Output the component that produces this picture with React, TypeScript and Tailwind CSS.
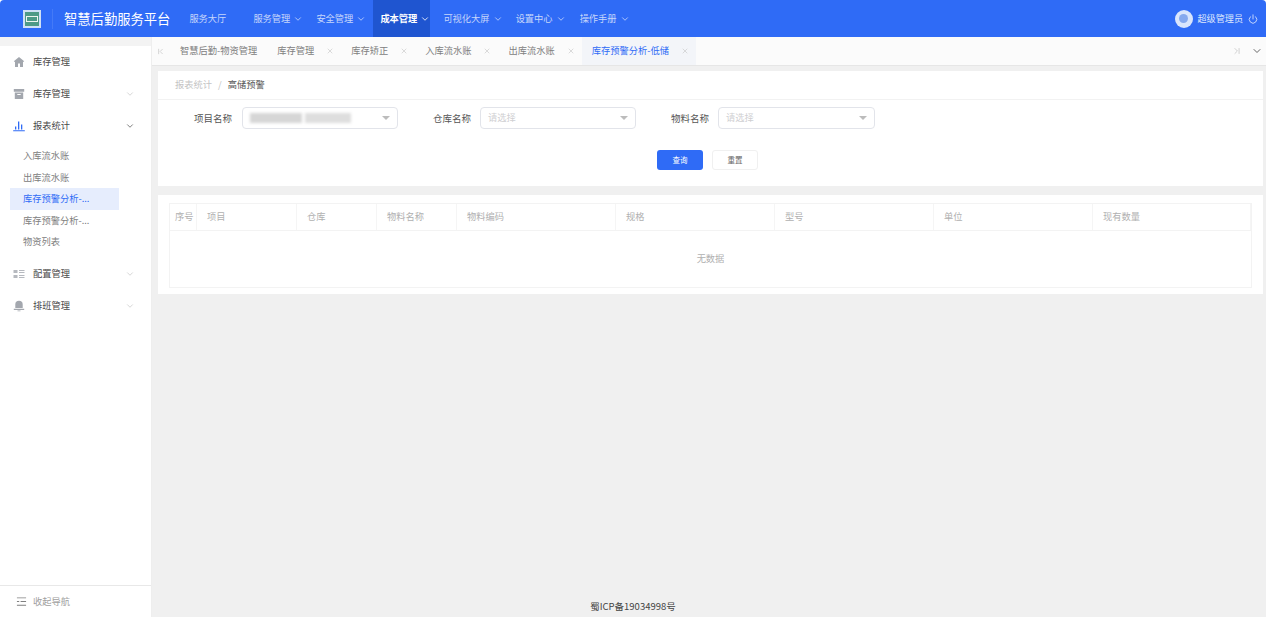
import { ChevronDown, ChevronFirst, ChevronLast, Power, X } from "lucide-react";

const font = "font-['Noto_Sans_CJK_SC','Noto_Sans',sans-serif]";

const topNav = [
  { label: "服务大厅", ml: "ml-[19px]", arrow: false },
  { label: "服务管理", ml: "ml-[27px]", arrow: true },
  { label: "安全管理", ml: "ml-[13px]", arrow: true },
  { label: "成本管理", ml: "ml-[7px]", arrow: true, active: true },
  { label: "可视化大屏", ml: "ml-[13px]", arrow: true },
  { label: "设置中心", ml: "ml-[13px]", arrow: true },
  { label: "操作手册", ml: "ml-[14px]", arrow: true },
];

const tabs = [
  { label: "智慧后勤-物资管理", closable: false },
  { label: "库存管理", closable: true },
  { label: "库存矫正", closable: true },
  { label: "入库流水账", closable: true },
  { label: "出库流水账", closable: true },
  { label: "库存预警分析-低储", closable: true, active: true },
];

const columns = [
  { label: "序号", w: "w-[27px]", px: "pl-[5px]" },
  { label: "项目", w: "w-[100px]", px: "pl-[10px]" },
  { label: "仓库", w: "w-[80px]", px: "pl-[10px]" },
  { label: "物料名称", w: "w-[80px]", px: "pl-[10px]" },
  { label: "物料编码", w: "w-[159px]", px: "pl-[10px]" },
  { label: "规格", w: "w-[159px]", px: "pl-[10px]" },
  { label: "型号", w: "w-[159px]", px: "pl-[10px]" },
  { label: "单位", w: "w-[159px]", px: "pl-[10px]" },
  { label: "现有数量", w: "flex-1", px: "pl-[10px]" },
];

function HomeIcon() {
  return (
    <svg viewBox="0 0 12 12" className="w-3 h-3 text-[#a3a7ae]" fill="currentColor">
      <path d="M6 1 .8 5.200l.7.8.5-.4V11h3V7.500h2V11h3V5.600l.5.4.7-.8z" />
    </svg>
  );
}

function BoxIcon() {
  return (
    <svg viewBox="0 0 12 12" className="w-3 h-3 text-[#a3a7ae]" fill="currentColor">
      <path d="M.8 1h10.400v2.800H.8zM1.800 4.600h8.400V11H1.800z" />
      <path d="M4.300 6h3.400v1H4.300z" fill="#fff" />
    </svg>
  );
}

function ChartIcon() {
  return (
    <svg viewBox="0 0 12 12" className="w-3 h-3 text-[#2f6bf6]" fill="currentColor">
      <path d="M2 6.500h1.300V9.500H2zM5 1.500h1.300v8H5zM8 4.500h1.300v5H8zM.2 10.300h11.600v1H.2z" />
    </svg>
  );
}

function ListIcon() {
  return (
    <svg viewBox="0 0 12 12" className="w-3 h-3 text-[#b6b9bf]" fill="currentColor">
      <path d="M.5 2h4v3h-4zM.5 7h4v3h-4zM6 2h5.500v1H6zM6 4h5.500v1H6zM6 7h5.500v1H6zM6 9h5.500v1H6z" />
    </svg>
  );
}

function BellIcon() {
  return (
    <svg viewBox="0 0 12 12" className="w-3 h-3 text-[#a3a7ae]" fill="currentColor">
      <path d="M6 .8a3.700 3.700 0 0 0-3.700 3.700V8H9.700V4.500A3.700 3.700 0 0 0 6 .8zM.8 8.800h10.400v1.200H.8zM4.500 10.500h3V11.300h-3z" />
    </svg>
  );
}

function SideItem({ icon, label, arrow, dark }: { icon: React.ReactNode; label: string; arrow?: boolean; dark?: boolean }) {
  return (
    <div className="h-8 flex items-center pl-[13px] pr-[16px]">
      <span className="w-3 h-3 shrink-0 flex">{icon}</span>
      <span className="ml-2 text-[9.25px] text-[#4a4a4a]">{label}</span>
      {arrow && <ChevronDown className={`ml-auto w-[10px] h-[10px] ${dark ? "text-[#666]" : "text-[#cfcfcf]"}`} />}
    </div>
  );
}

function SelectBox({ placeholder, blurred, className }: { placeholder?: string; blurred?: boolean; className: string }) {
  return (
    <div className={`${className} h-[22px] border border-[#e2e4ea] rounded-[4px] flex items-center pl-[7px] pr-[7px] bg-white`}>
      {blurred ? (
        <div className="flex gap-[3px] blur-[1.500px]">
          <span className="w-[52px] h-[10px] bg-[#d6d6d6]" />
          <span className="w-[46px] h-[10px] bg-[#dedede]" />
        </div>
      ) : (
        <span className="text-[9.25px] text-[#cfcfd2]">{placeholder}</span>
      )}
      <span className="ml-auto w-0 h-0 border-x-[4px] border-x-transparent border-t-[4px] border-t-[#bcbcbc]" />
    </div>
  );
}

export default function App() {
  return (
    <div className={`h-screen flex flex-col overflow-hidden bg-white ${font}`}>
      {/* Header */}
      <header className="h-[37px] shrink-0 bg-[#2f6bf6] rounded-t-[4px] flex items-center text-white">
        <div className="ml-[23px] w-[18px] h-[18px] border-2 border-[#cfe0f5] bg-[#4e9a86] flex items-center justify-center">
          <span className="w-[12px] h-[6px] border border-[#eef4ee]" />
        </div>
        <span className="ml-[11px] w-px h-5 bg-white/10" />
        <span className="ml-[11px] text-[13.300px] whitespace-nowrap">智慧后勤服务平台</span>
        <nav className="flex items-stretch h-full">
          {topNav.map((n) => (
            <div
              key={n.label}
              className={`${n.ml} flex items-center text-[9.250px] ${
                n.active ? "bg-[#1f55d0] pl-[7px] font-bold text-white" : "text-[#c6d6fb]"
              }`}
            >
              {n.label}
              {n.arrow && <ChevronDown className="ml-[3px] w-[10px] h-[10px]" />}
            </div>
          ))}
        </nav>
        <div className="ml-auto flex items-center pr-2">
          <span className="w-[18px] h-[18px] rounded-full bg-[#d9e5fc] flex items-center justify-center">
            <span className="w-[9px] h-[9px] rounded-full bg-[#86a9ee]" />
          </span>
          <span className="ml-[5px] text-[9.100px] text-[#dfe8fd]">超级管理员</span>
          <Power className="ml-[5px] w-[10px] h-[10px] text-[#dfe8fd]" />
        </div>
      </header>

      <div className="flex-1 flex min-h-0">
        {/* Sidebar */}
        <aside className="w-[152px] shrink-0 flex flex-col bg-white border-r border-[#eeeeee]">
          <div className="h-[9px] bg-[#f3f3f3]" />
          <div className="flex-1">
            <SideItem icon={<HomeIcon />} label="库存管理" />
            <SideItem icon={<BoxIcon />} label="库存管理" arrow />
            <SideItem icon={<ChartIcon />} label="报表统计" arrow dark />
            <div className="pt-[3px] text-[9.250px] text-[#808080] leading-[21.600px] mr-[32px] ml-[10px]">
              <div className="pl-[13px]">入库流水账</div>
              <div className="pl-[13px]">出库流水账</div>
              <div className="pl-[13px] bg-[#e6edfd] text-[#2f6bf6]">库存预警分析-...</div>
              <div className="pl-[13px]">库存预警分析-...</div>
              <div className="pl-[13px]">物资列表</div>
            </div>
            <div className="pt-[5px]">
              <SideItem icon={<ListIcon />} label="配置管理" arrow />
              <SideItem icon={<BellIcon />} label="排班管理" arrow />
            </div>
          </div>
          <div className="h-[32px] border-t border-[#e8e8e8] flex items-center pl-4 text-[9.250px] text-[#a0a0a0]">
            <svg viewBox="0 0 12 12" className="w-[11px] h-[11px] text-[#808080]" fill="currentColor">
              <path d="M1 1.500h10v1H1zM1 5.500h2.500v1H1zM5 5.500h6v1H5zM1 9.500h10v1H1z" />
            </svg>
            <span className="ml-[6px]">收起导航</span>
          </div>
        </aside>

        {/* Main */}
        <main className="flex-1 min-w-0 flex flex-col bg-[#f0f0f0]">
          <div className="h-[29px] shrink-0 bg-[#fbfbfb] border-b border-[#e6e6e6] flex items-center text-[9.250px] text-[#808080]">
            <ChevronFirst className="ml-[4px] w-[9px] h-[9px] text-[#c8c8c8]" />
            <div className="ml-[5px] flex items-center h-full">
              {tabs.map((t) => (
                <div
                  key={t.label}
                  className={`h-full flex items-center pl-[10px] ${t.closable ? "pr-[7px]" : "pr-[10px]"} ${
                    t.active ? "bg-[#f3f5f9] text-[#2f6bf6]" : ""
                  }`}
                >
                  {t.label}
                  {t.closable && <X className="ml-[12px] w-[8px] h-[8px] text-[#c8c8c8]" />}
                </div>
              ))}
            </div>
            <ChevronLast className="ml-auto w-[10px] h-[10px] text-[#c8c8c8]" />
            <ChevronDown className="ml-[9px] mr-[3px] w-[12px] h-[12px] text-[#666]" />
          </div>

          {/* Filter card */}
          <section className="mt-[5px] ml-[6px] mr-[3px] h-[115px] shrink-0 bg-white">
            <div className="h-[29px] border-b border-[#f2f2f2] flex items-center pl-[17px] text-[9.250px] text-[#c4c4c4]">
              报表统计
              <span className="mx-[6px]">/</span>
              <span className="text-[#555]">高储预警</span>
            </div>
            <div className="mt-[7px] flex items-center text-[9.500px] text-[#555]">
              <span className="w-[74px] text-right">项目名称</span>
              <SelectBox blurred className="ml-[10px] w-[156px]" />
              <span className="w-[73px] text-right">仓库名称</span>
              <SelectBox placeholder="请选择" className="ml-[9px] w-[156px]" />
              <span className="w-[73px] text-right">物料名称</span>
              <SelectBox placeholder="请选择" className="ml-[9px] w-[157px]" />
            </div>
            <div className="mt-[21px] flex justify-center gap-[9px] pr-[6px]">
              <button className="w-[46px] h-[20px] rounded-[3px] bg-[#2f6bf6] text-white text-[7.500px]">查询</button>
              <button className="w-[46px] h-[20px] rounded-[3px] bg-white border border-[#f0f0f0] text-[#666] text-[7.500px]">重置</button>
            </div>
          </section>

          {/* Table card */}
          <section className="mt-[9px] ml-[6px] mr-[3px] h-[99px] shrink-0 bg-white px-[11px] pt-[8px]">
            <div className="h-[85px] border border-[#f3f3f3]">
              <div className="h-[27px] flex border-b border-[#f3f3f3] text-[9.250px] text-[#b0b0b0]">
                {columns.map((c) => (
                  <div key={c.label} className={`${c.w} ${c.px} flex items-center border-r border-[#f5f5f5]`}>
                    {c.label}
                  </div>
                ))}
              </div>
              <div className="h-[56px] flex items-center justify-center text-[9.250px] text-[#b0b0b0]">无数据</div>
            </div>
          </section>

          <footer className="mt-auto h-[22px] pr-[152px] flex items-center justify-center text-[9.500px] text-[#444]">
            蜀ICP备19034998号
          </footer>
        </main>
      </div>
    </div>
  );
}
